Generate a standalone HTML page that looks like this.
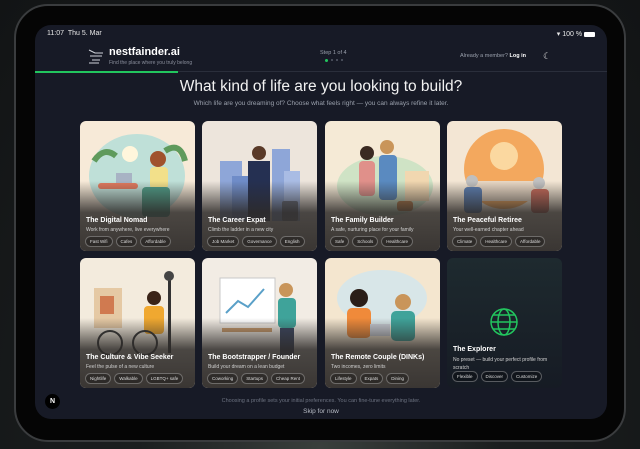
<!DOCTYPE html>
<html><head><meta charset="utf-8"><style>
*{margin:0;padding:0;box-sizing:border-box}
body{width:640px;height:449px;overflow:hidden;background:radial-gradient(ellipse at 50% 100%,#3a3f3c 0%,#1b1e1f 40%,#121415 100%);font-family:"Liberation Sans",sans-serif;position:relative}
.dev{position:absolute;left:14px;top:4px;width:612px;height:438px;border-radius:34px;background:#050505;border:2px solid #3a3c3e}
.scr{position:absolute;left:35px;top:25px;width:572px;height:394px;border-radius:16px;background:#171a26;overflow:hidden}
.st{position:absolute;top:5px;font-size:7px;color:#e8e8e8}
.hdr{position:absolute;left:0;top:16px;width:100%;height:31px;border-bottom:1px solid #2a2e3b}
.prog{position:absolute;left:0;top:46px;width:143px;height:2px;background:#22c55e}
.logo{position:absolute;left:74px;top:21px;font-size:11px;color:#fff;font-weight:bold}
.tag{position:absolute;left:74px;top:35px;font-size:5px;color:#8a8f9c}
h1{position:absolute;top:53px;width:100%;text-align:center;font-size:15.5px;color:#f2f2f2;font-weight:normal}
.sub{position:absolute;top:75px;width:100%;text-align:center;font-size:6.5px;color:#9aa0ac}
.card{position:absolute;width:115px;height:130px;border-radius:6px;overflow:hidden}
.card .ov{position:absolute;left:0;right:0;bottom:0;height:70px;background:linear-gradient(to bottom,rgba(30,30,35,0),rgba(45,42,40,.85) 45%,#3a3633)}
.card .t{position:absolute;left:6px;top:96px;font-size:7px;color:#fff;font-weight:bold}
.card .d{position:absolute;left:6px;top:106px;font-size:5px;color:#d0d0d0}
.card .tg{position:absolute;left:5px;top:115px;display:flex;gap:3px}
.card .tg span{font-size:4.5px;color:#ddd;border:1px solid rgba(255,255,255,.3);border-radius:6px;padding:2px 4px;background:rgba(0,0,0,.25)}
</style></head><body>
<div class="dev"></div>
<div class="scr">
<div class="st" style="left:12px">11:07 &nbsp;Thu 5. Mar</div>
<div class="st" style="right:12px">&#9662; 100 % <span style="display:inline-block;width:11px;height:5px;background:#fff;border-radius:1px;vertical-align:middle"></span></div>
<div class="hdr"></div>
<svg style="position:absolute;left:52px;top:22px" width="18" height="18" viewBox="0 0 18 18" fill="none" stroke="#cfd3da" stroke-width="1"><path d="M2 3l6 3h8M3 9h12M5 13h8M2 16h10"/></svg>
<div class="logo">nestfainder.ai</div>
<div class="tag">Find the place where you truly belong</div>
<div style="position:absolute;left:285px;top:25px;font-size:5.5px;color:#9aa0ac">Step 1 of 4</div>
<div style="position:absolute;left:290px;top:34px;width:3px;height:3px;border-radius:50%;background:#22c55e"></div>
<div style="position:absolute;left:296px;top:34px;width:2px;height:2px;border-radius:50%;background:#555b68;box-shadow:5px 0 #555b68,10px 0 #555b68"></div>
<div style="position:absolute;left:425px;top:28px;font-size:5.5px;color:#9aa0ac">Already a member? <b style="color:#fff">Log in</b></div>
<div style="position:absolute;left:508px;top:26px;font-size:9px;color:#ddd">&#9790;</div>
<div class="prog"></div>
<h1>What kind of life are you looking to build?</h1>
<div class="sub">Which life are you dreaming of? Choose what feels right — you can always refine it later.</div>

<div class="card" style="left:45px;top:96px;background:#f7ead8">
<svg width="115" height="100"><ellipse cx="57" cy="55" rx="48" ry="42" fill="#bfe0d8"/><circle cx="50" cy="33" r="8" fill="#fff6dc"/><path d="M14 40q10-15 22-5M85 30q15-10 20 10" stroke="#5f9a5c" stroke-width="6" fill="none"/><rect x="18" y="62" width="40" height="6" rx="3" fill="#e07a5f"/><rect x="36" y="52" width="16" height="10" fill="#a8b3c4"/><circle cx="78" cy="38" r="8" fill="#a0522d"/><rect x="70" y="46" width="18" height="22" rx="4" fill="#f2e08a"/><rect x="62" y="66" width="28" height="30" rx="4" fill="#4e9b86"/></svg>
<div class="ov"></div><div class="t">The Digital Nomad</div><div class="d">Work from anywhere, live everywhere</div><div class="tg"><span>Fast Wifi</span><span>Cafes</span><span>Affordable</span></div></div>

<div class="card" style="left:167px;top:96px;background:#ede5dc">
<svg width="115" height="100"><rect x="18" y="40" width="22" height="60" fill="#8ea6d8"/><rect x="30" y="55" width="18" height="45" fill="#6f8cc8"/><rect x="70" y="28" width="18" height="72" fill="#8ea6d8"/><rect x="82" y="50" width="16" height="50" fill="#a9bce4"/><rect x="46" y="40" width="22" height="60" fill="#253052"/><circle cx="57" cy="32" r="7" fill="#5a3a28"/><rect x="80" y="80" width="16" height="20" rx="2" fill="#6a7080"/></svg>
<div class="ov"></div><div class="t">The Career Expat</div><div class="d">Climb the ladder in a new city</div><div class="tg"><span>Job Market</span><span>Governance</span><span>English</span></div></div>

<div class="card" style="left:290px;top:96px;background:#f5ead6">
<svg width="115" height="100"><ellipse cx="60" cy="65" rx="48" ry="30" fill="#cfe3c5"/><rect x="80" y="50" width="24" height="30" fill="#f1d7b0"/><circle cx="42" cy="32" r="7" fill="#3a2a22"/><rect x="34" y="40" width="16" height="35" rx="4" fill="#e0908a"/><circle cx="62" cy="26" r="7" fill="#c9955a"/><rect x="54" y="34" width="18" height="45" rx="4" fill="#5a8ac0"/><rect x="72" y="80" width="16" height="10" rx="3" fill="#b97d4a"/></svg>
<div class="ov"></div><div class="t">The Family Builder</div><div class="d">A safe, nurturing place for your family</div><div class="tg"><span>Safe</span><span>Schools</span><span>Healthcare</span></div></div>

<div class="card" style="left:412px;top:96px;background:#f3e6d4">
<svg width="115" height="100"><circle cx="57" cy="48" r="40" fill="#f3a85e"/><circle cx="57" cy="35" r="14" fill="#fbd8a0"/><rect x="20" y="60" width="75" height="20" fill="#e9d8c5"/><circle cx="25" cy="60" r="6" fill="#bfbfbf"/><rect x="17" y="66" width="18" height="26" rx="4" fill="#5b7db0"/><circle cx="92" cy="62" r="6" fill="#c0c0c0"/><rect x="84" y="68" width="18" height="24" rx="4" fill="#c86a5a"/></svg>
<div class="ov"></div><div class="t">The Peaceful Retiree</div><div class="d">Your well-earned chapter ahead</div><div class="tg"><span>Climate</span><span>Healthcare</span><span>Affordable</span></div></div>

<div class="card" style="left:45px;top:233px;background:#f3ebdd">
<svg width="115" height="100"><rect x="14" y="30" width="28" height="40" fill="#e5c9a4"/><rect x="20" y="38" width="14" height="18" fill="#d07a50"/><rect x="88" y="20" width="3" height="75" fill="#333"/><circle cx="89" cy="18" r="5" fill="#444"/><circle cx="74" cy="40" r="7" fill="#3a2418"/><rect x="64" y="48" width="20" height="28" rx="4" fill="#f0a830"/><circle cx="30" cy="85" r="12" fill="none" stroke="#333" stroke-width="2"/><circle cx="65" cy="85" r="12" fill="none" stroke="#333" stroke-width="2"/></svg>
<div class="ov"></div><div class="t">The Culture &amp; Vibe Seeker</div><div class="d">Feel the pulse of a new culture</div><div class="tg"><span>Nightlife</span><span>Walkable</span><span>LGBTQ+ safe</span></div></div>

<div class="card" style="left:167px;top:233px;background:#f2ece4">
<svg width="115" height="100"><rect x="18" y="20" width="55" height="45" fill="#fff" stroke="#c8c8c8"/><path d="M24 55l12-12 10 6 16-18" stroke="#5aa0c8" stroke-width="2" fill="none"/><rect x="20" y="70" width="50" height="4" fill="#c89a6a"/><circle cx="84" cy="32" r="7" fill="#c9955a"/><rect x="76" y="40" width="18" height="30" rx="4" fill="#3fa39a"/><rect x="78" y="70" width="14" height="28" fill="#3a4560"/></svg>
<div class="ov"></div><div class="t">The Bootstrapper / Founder</div><div class="d">Build your dream on a lean budget</div><div class="tg"><span>Coworking</span><span>Startups</span><span>Cheap Rent</span></div></div>

<div class="card" style="left:290px;top:233px;background:#f4e6cf">
<svg width="115" height="100"><ellipse cx="57" cy="40" rx="45" ry="28" fill="#d8e6e8"/><circle cx="34" cy="40" r="9" fill="#2a1e18"/><rect x="22" y="50" width="24" height="30" rx="5" fill="#f08a3a"/><circle cx="78" cy="44" r="8" fill="#c9955a"/><rect x="66" y="53" width="24" height="30" rx="5" fill="#3fa39a"/><rect x="45" y="66" width="20" height="12" fill="#c8ccd4"/></svg>
<div class="ov"></div><div class="t">The Remote Couple (DINKs)</div><div class="d">Two incomes, zero limits</div><div class="tg"><span>Lifestyle</span><span>Expats</span><span>Dining</span></div></div>

<div class="card" style="left:412px;top:233px;background:linear-gradient(#1e2a2f,#161b24)">
<svg width="115" height="100" fill="none" stroke="#22c55e" stroke-width="1.5"><circle cx="57" cy="64" r="13"/><ellipse cx="57" cy="64" rx="6" ry="13"/><path d="M44 64h26M46 57h22M46 71h22"/></svg>
<div class="t" style="top:88px">The Explorer</div><div class="d" style="top:98px;width:105px;line-height:8px">No preset — build your perfect profile from scratch</div><div class="tg" style="top:113px"><span>Flexible</span><span>Discover</span><span>Customize</span></div></div>

<div style="position:absolute;top:373px;width:100%;text-align:center;font-size:5.5px;color:#6c7280">Choosing a profile sets your initial preferences. You can fine-tune everything later.</div>
<div style="position:absolute;top:383px;width:100%;text-align:center;font-size:6.5px;color:#b8bcc6">Skip for now</div>
<div style="position:absolute;left:10px;top:369px;width:15px;height:15px;border-radius:50%;background:#000;color:#fff;font-size:7px;font-weight:bold;text-align:center;line-height:15px">N</div>
</div>
</body></html>
